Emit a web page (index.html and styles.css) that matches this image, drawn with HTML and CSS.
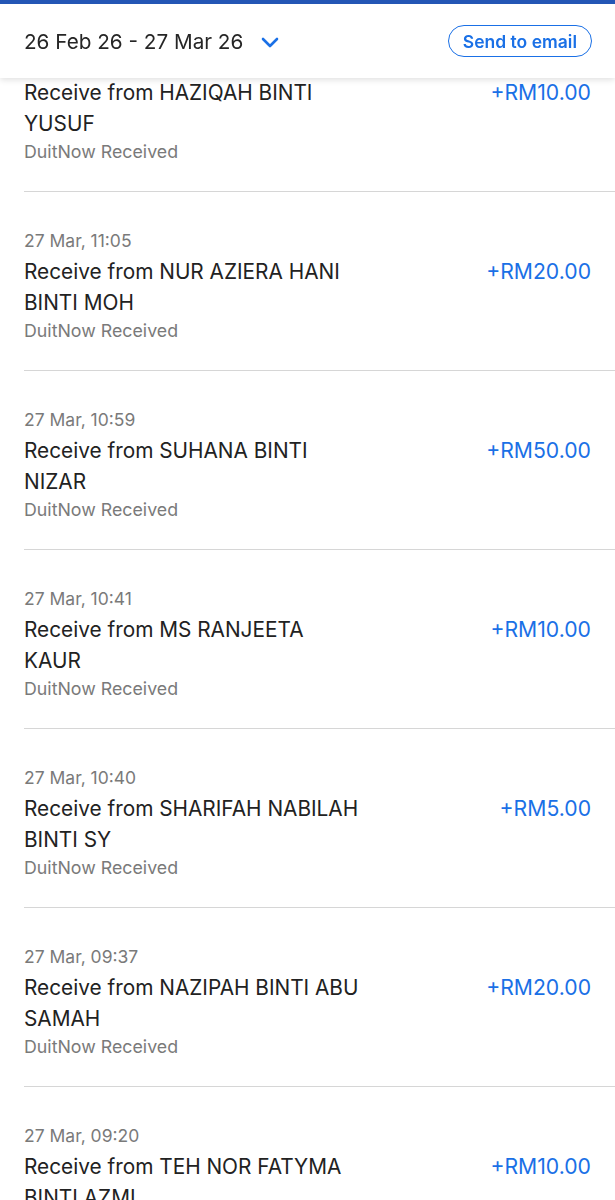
FILE: index.html
```
<!DOCTYPE html>
<html lang="en">
<head>
  <meta charset="UTF-8">
  <title>Transaction history</title>
  <link rel="stylesheet" href="styles.css">
</head>
<body>

  <div class="topbar">
    <div class="range">
      <span>26 Feb 26 - 27 Mar 26</span>
      <svg class="chevron" width="18" height="11" viewBox="0 0 18 11">
        <path d="M2 2 L9 9 L16 2" fill="none" stroke="currentColor" stroke-width="2.6" stroke-linecap="round" stroke-linejoin="round"/>
      </svg>
    </div>
    <button class="email-btn">Send to email</button>
  </div>

  <div class="list">
    <!-- first row is scrolled under the header, its date is out of view -->
    <div class="txn partial">
      <div class="txn-row">
        <div class="txn-title">Receive from HAZIQAH BINTI YUSUF</div>
        <div class="txn-amount">+RM10.00</div>
      </div>
      <div class="txn-type">DuitNow Received</div>
    </div>

    <div class="txn">
      <div class="txn-date">27 Mar, 11:05</div>
      <div class="txn-row">
        <div class="txn-title">Receive from NUR AZIERA HANI BINTI MOH</div>
        <div class="txn-amount">+RM20.00</div>
      </div>
      <div class="txn-type">DuitNow Received</div>
    </div>

    <div class="txn">
      <div class="txn-date">27 Mar, 10:59</div>
      <div class="txn-row">
        <div class="txn-title">Receive from SUHANA BINTI NIZAR</div>
        <div class="txn-amount">+RM50.00</div>
      </div>
      <div class="txn-type">DuitNow Received</div>
    </div>

    <div class="txn">
      <div class="txn-date">27 Mar, 10:41</div>
      <div class="txn-row">
        <div class="txn-title">Receive from MS RANJEETA KAUR</div>
        <div class="txn-amount">+RM10.00</div>
      </div>
      <div class="txn-type">DuitNow Received</div>
    </div>

    <div class="txn">
      <div class="txn-date">27 Mar, 10:40</div>
      <div class="txn-row">
        <div class="txn-title">Receive from SHARIFAH NABILAH BINTI SY</div>
        <div class="txn-amount">+RM5.00</div>
      </div>
      <div class="txn-type">DuitNow Received</div>
    </div>

    <div class="txn">
      <div class="txn-date">27 Mar, 09:37</div>
      <div class="txn-row">
        <div class="txn-title">Receive from NAZIPAH BINTI ABU SAMAH</div>
        <div class="txn-amount">+RM20.00</div>
      </div>
      <div class="txn-type">DuitNow Received</div>
    </div>

    <div class="txn">
      <div class="txn-date">27 Mar, 09:20</div>
      <div class="txn-row">
        <div class="txn-title">Receive from TEH NOR FATYMA BINTI AZMI</div>
        <div class="txn-amount">+RM10.00</div>
      </div>
      <div class="txn-type">DuitNow Received</div>
    </div>
  </div>

</body>
</html>
```

FILE: styles.css
```
:root {
  --blue: #1a70e6;
  --bar: #2456b5;
  --text: #222;
  --muted: #7a7a7a;
  --line: #d6d6d6;
}

body {
  margin: 0;
  font-family: Inter, 'Noto Sans', sans-serif;
  background-color: #fff;
  color: var(--text);
  overflow: hidden;
}

.topbar {
  position: fixed;
  top: 0;
  left: 0;
  right: 0;
  z-index: 2;
  height: 74px;
  border-top: 4px solid var(--bar);
  background-color: #fff;
  box-shadow: 0 2px 6px rgba(0,0,0,0.12);
  display: flex;
  align-items: center;
  justify-content: space-between;
  padding: 0 23px 0 24px;
}

.range {
  display: flex;
  align-items: center;
  gap: 18px;
  font-size: 20.7px;
  color: #262626;
}

.chevron {
  color: var(--blue);
  margin-top: 2px;
}

.email-btn {
  font-family: inherit;
  font-size: 17.5px;
  font-weight: 600;
  color: var(--blue);
  background: #fff;
  border: 1.5px solid var(--blue);
  border-radius: 16px;
  height: 32px;
  padding: 0 14px;
}

.list {
  margin-top: 77px;
}

.txn {
  margin-left: 24px;
  padding: 34px 24px 26px 0;
  border-bottom: 1px solid var(--line);
}

.txn.partial {
  padding-top: 0;
}

.txn-date {
  font-size: 17.5px;
  line-height: 30px;
  color: var(--muted);
}

.txn-row {
  display: flex;
  justify-content: space-between;
  align-items: flex-start;
}

.txn-title {
  font-size: 20.8px;
  line-height: 31px;
  width: 340px;
  color: var(--text);
}

.txn-amount {
  font-size: 21.2px;
  line-height: 31px;
  color: var(--blue);
}

.txn-type {
  font-size: 17.8px;
  line-height: 26px;
  color: var(--muted);
}
```
